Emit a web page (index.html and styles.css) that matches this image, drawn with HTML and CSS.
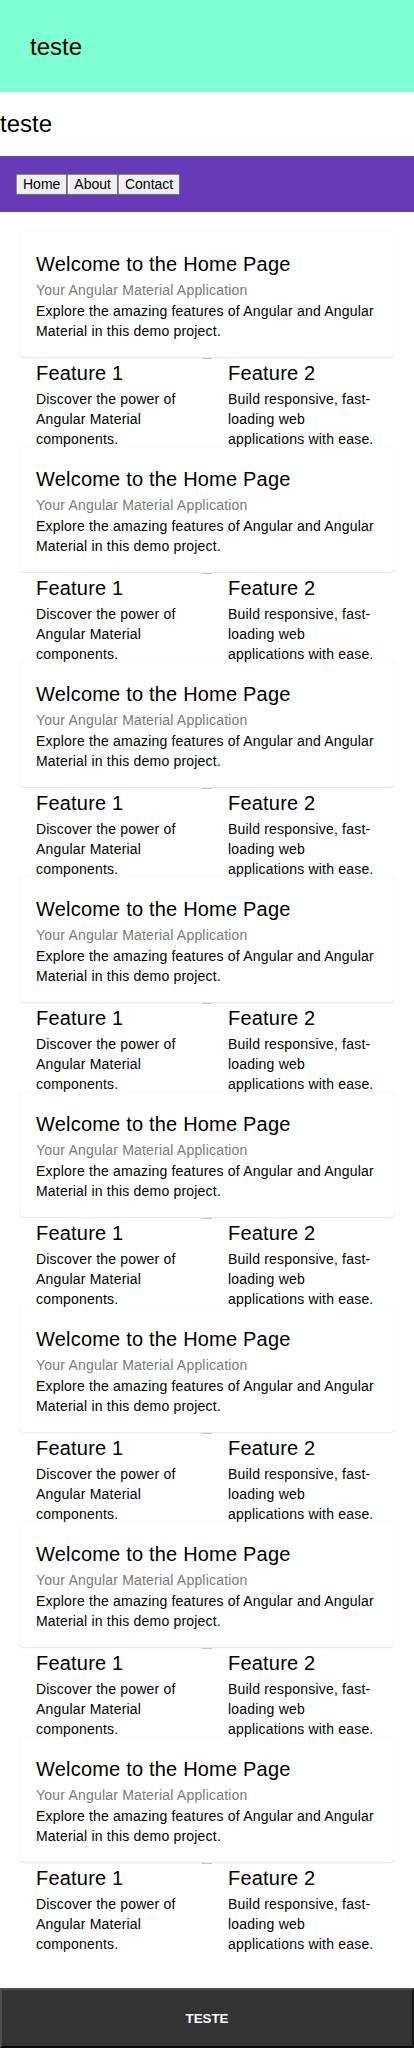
FILE: index.html
```html
<!DOCTYPE html>
<html lang="pt">
<head>
<meta charset="utf-8">
<title>teste</title>
<link rel="stylesheet" href="styles.css">
</head>
<body>
<header class="top-header"><span class="top-title">teste</span></header>
<div class="sub-title">teste</div>
<nav class="nav-bar"><button class="nav-btn">Home</button><button class="nav-btn">About</button><button class="nav-btn">Contact</button></nav>
<main class="content">
  <section class="block">
    <div class="card">
      <div class="card-title">Welcome to the Home Page</div>
      <div class="card-subtitle">Your Angular Material Application</div>
      <p class="card-text">Explore the amazing features of Angular and Angular Material in this demo project.</p>
    </div>
    <div class="features">
      <div class="feature"><div class="feature-title">Feature 1</div><p class="feature-text">Discover the power of Angular Material components.</p></div>
      <div class="feature-sep"></div>
      <div class="feature"><div class="feature-title">Feature 2</div><p class="feature-text">Build responsive, fast-loading web applications with ease.</p></div>
    </div>
  </section>
  <section class="block">
    <div class="card">
      <div class="card-title">Welcome to the Home Page</div>
      <div class="card-subtitle">Your Angular Material Application</div>
      <p class="card-text">Explore the amazing features of Angular and Angular Material in this demo project.</p>
    </div>
    <div class="features">
      <div class="feature"><div class="feature-title">Feature 1</div><p class="feature-text">Discover the power of Angular Material components.</p></div>
      <div class="feature-sep"></div>
      <div class="feature"><div class="feature-title">Feature 2</div><p class="feature-text">Build responsive, fast-loading web applications with ease.</p></div>
    </div>
  </section>
  <section class="block">
    <div class="card">
      <div class="card-title">Welcome to the Home Page</div>
      <div class="card-subtitle">Your Angular Material Application</div>
      <p class="card-text">Explore the amazing features of Angular and Angular Material in this demo project.</p>
    </div>
    <div class="features">
      <div class="feature"><div class="feature-title">Feature 1</div><p class="feature-text">Discover the power of Angular Material components.</p></div>
      <div class="feature-sep"></div>
      <div class="feature"><div class="feature-title">Feature 2</div><p class="feature-text">Build responsive, fast-loading web applications with ease.</p></div>
    </div>
  </section>
  <section class="block">
    <div class="card">
      <div class="card-title">Welcome to the Home Page</div>
      <div class="card-subtitle">Your Angular Material Application</div>
      <p class="card-text">Explore the amazing features of Angular and Angular Material in this demo project.</p>
    </div>
    <div class="features">
      <div class="feature"><div class="feature-title">Feature 1</div><p class="feature-text">Discover the power of Angular Material components.</p></div>
      <div class="feature-sep"></div>
      <div class="feature"><div class="feature-title">Feature 2</div><p class="feature-text">Build responsive, fast-loading web applications with ease.</p></div>
    </div>
  </section>
  <section class="block">
    <div class="card">
      <div class="card-title">Welcome to the Home Page</div>
      <div class="card-subtitle">Your Angular Material Application</div>
      <p class="card-text">Explore the amazing features of Angular and Angular Material in this demo project.</p>
    </div>
    <div class="features">
      <div class="feature"><div class="feature-title">Feature 1</div><p class="feature-text">Discover the power of Angular Material components.</p></div>
      <div class="feature-sep"></div>
      <div class="feature"><div class="feature-title">Feature 2</div><p class="feature-text">Build responsive, fast-loading web applications with ease.</p></div>
    </div>
  </section>
  <section class="block">
    <div class="card">
      <div class="card-title">Welcome to the Home Page</div>
      <div class="card-subtitle">Your Angular Material Application</div>
      <p class="card-text">Explore the amazing features of Angular and Angular Material in this demo project.</p>
    </div>
    <div class="features">
      <div class="feature"><div class="feature-title">Feature 1</div><p class="feature-text">Discover the power of Angular Material components.</p></div>
      <div class="feature-sep"></div>
      <div class="feature"><div class="feature-title">Feature 2</div><p class="feature-text">Build responsive, fast-loading web applications with ease.</p></div>
    </div>
  </section>
  <section class="block">
    <div class="card">
      <div class="card-title">Welcome to the Home Page</div>
      <div class="card-subtitle">Your Angular Material Application</div>
      <p class="card-text">Explore the amazing features of Angular and Angular Material in this demo project.</p>
    </div>
    <div class="features">
      <div class="feature"><div class="feature-title">Feature 1</div><p class="feature-text">Discover the power of Angular Material components.</p></div>
      <div class="feature-sep"></div>
      <div class="feature"><div class="feature-title">Feature 2</div><p class="feature-text">Build responsive, fast-loading web applications with ease.</p></div>
    </div>
  </section>
  <section class="block">
    <div class="card">
      <div class="card-title">Welcome to the Home Page</div>
      <div class="card-subtitle">Your Angular Material Application</div>
      <p class="card-text">Explore the amazing features of Angular and Angular Material in this demo project.</p>
    </div>
    <div class="features">
      <div class="feature"><div class="feature-title">Feature 1</div><p class="feature-text">Discover the power of Angular Material components.</p></div>
      <div class="feature-sep"></div>
      <div class="feature"><div class="feature-title">Feature 2</div><p class="feature-text">Build responsive, fast-loading web applications with ease.</p></div>
    </div>
  </section>
</main>
<footer class="footer">TESTE</footer>
</body>
</html>
```
FILE: styles.css
```css
html, body {
  margin: 0;
  padding: 0;
}
body {
  font-family: "Liberation Sans", Arial, Helvetica, sans-serif;
  color: #000;
  background: #fff;
}
.top-header {
  height: 92px;
  background: #7fffd4;
  display: flex;
  align-items: center;
  padding: 0 30px;
  box-sizing: border-box;
}
.top-title {
  font-size: 24px;
  line-height: 28px;
  margin-top: 2px;
}
.sub-title {
  height: 64px;
  font-size: 24px;
  line-height: 64px;
}
.nav-bar {
  height: 56px;
  background: #673ab7;
  display: flex;
  align-items: center;
  padding: 0 16px;
  box-sizing: border-box;
}
.nav-btn {
  font-family: "Liberation Sans", Arial, Helvetica, sans-serif;
  font-size: 14px;
  line-height: 16px;
  padding: 1px 6px;
  margin: 0;
  color: #000;
  background: #efefef;
  border-width: 1px;
  border-style: solid;
  border-color: #8a8a8a #6f6f6f #6f6f6f #8a8a8a;
  border-radius: 2px;
  height: 21px;
  box-shadow: inset 1px 1px 0 #fafafa;
}
.content {
  padding: 20px 20px 36px;
}
.block {
  display: flex;
  flex-direction: column;
}
.card {
  position: relative;
  background: #fff;
  border-radius: 4px;
  padding: 16px;
  box-shadow: 0 1px 2px rgba(0, 0, 0, 0.10), 0 0 1px rgba(0, 0, 0, 0.12);
}
.card-title {
  font-size: 20px;
  line-height: 32px;
  letter-spacing: 0.2px;
}
.card-subtitle {
  font-size: 14px;
  line-height: 21px;
  letter-spacing: 0.2px;
  color: #7a7a7a;
}
.card-text {
  margin: 0;
  font-size: 14px;
  line-height: 20px;
  letter-spacing: 0.2px;
}
.features {
  display: grid;
  grid-template-columns: 1fr 10px 1fr;
  margin-bottom: -2px;
}
.feature {
  padding: 0 16px;
}
.feature-sep {
  height: 1px;
  margin-top: 1px;
  background: #c8c8c8;
}
.feature-title {
  font-size: 20px;
  line-height: 32px;
  letter-spacing: 0.2px;
}
.feature-text {
  margin: 0;
  font-size: 14px;
  line-height: 20px;
  letter-spacing: 0.2px;
}
.footer {
  height: 60px;
  box-sizing: border-box;
  background: #333;
  border-style: solid;
  border-width: 2px;
  border-color: #4f4f4f #151515 #0a0a0a #4f4f4f;
  color: #fff;
  font-size: 13.333px;
  font-weight: bold;
  display: flex;
  align-items: center;
  justify-content: center;
}
```
